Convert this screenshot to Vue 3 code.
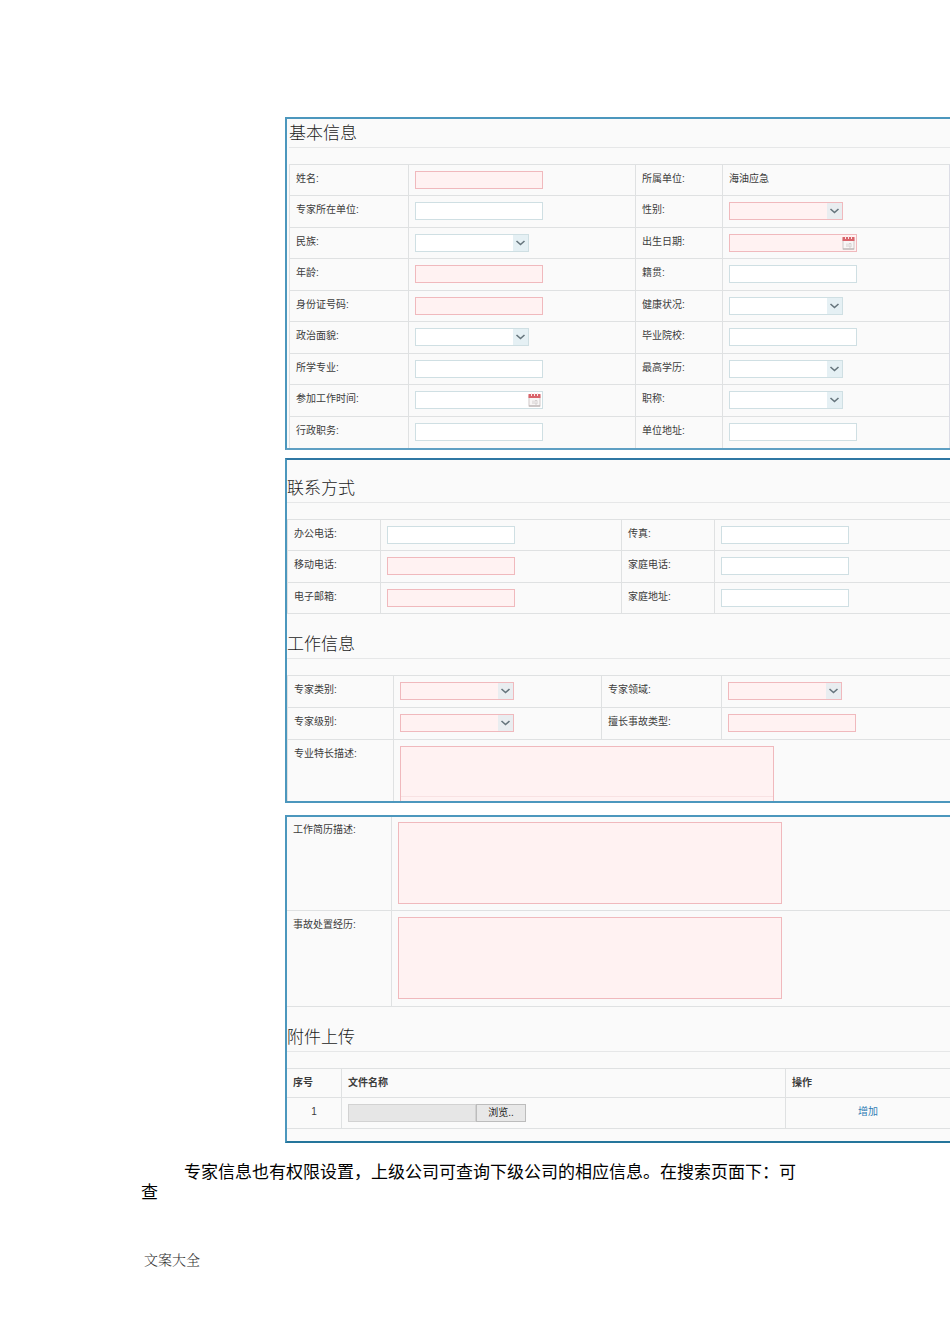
<script setup>
import { reactive } from 'vue'

const basicRows = [
  [{ id: 'name', label: '姓名', type: 'text', required: true }, { id: 'org', label: '所属单位', type: 'static', value: '海油应急' }],
  [{ id: 'workUnit', label: '专家所在单位', type: 'text' }, { id: 'gender', label: '性别', type: 'select', required: true }],
  [{ id: 'nation', label: '民族', type: 'select' }, { id: 'birthday', label: '出生日期', type: 'date', required: true }],
  [{ id: 'age', label: '年龄', type: 'text', required: true }, { id: 'native', label: '籍贯', type: 'text' }],
  [{ id: 'idCard', label: '身份证号码', type: 'text', required: true }, { id: 'health', label: '健康状况', type: 'select' }],
  [{ id: 'politics', label: '政治面貌', type: 'select' }, { id: 'school', label: '毕业院校', type: 'text' }],
  [{ id: 'major', label: '所学专业', type: 'text' }, { id: 'degree', label: '最高学历', type: 'select' }],
  [{ id: 'workDate', label: '参加工作时间', type: 'date' }, { id: 'title', label: '职称', type: 'select' }],
  [{ id: 'duty', label: '行政职务', type: 'text' }, { id: 'address', label: '单位地址', type: 'text' }],
]
const contactRows = [
  [{ id: 'officeTel', label: '办公电话', type: 'text' }, { id: 'fax', label: '传真', type: 'text' }],
  [{ id: 'mobile', label: '移动电话', type: 'text', required: true }, { id: 'homeTel', label: '家庭电话', type: 'text' }],
  [{ id: 'email', label: '电子邮箱', type: 'text', required: true }, { id: 'homeAddress', label: '家庭地址', type: 'text' }],
]
const workRows = [
  [{ id: 'category', label: '专家类别', type: 'select', required: true }, { id: 'field', label: '专家领域', type: 'select', required: true }],
  [{ id: 'level', label: '专家级别', type: 'select', required: true }, { id: 'accident', label: '擅长事故类型', type: 'text', required: true }],
]
const sections = [
  { key: 'basic', panel: 'first', title: '基本信息', rows: basicRows },
  { key: 'contact', panel: 'second', title: '联系方式', rows: contactRows },
  { key: 'work', panel: 'second', title: '工作信息', rows: workRows, extra: { id: 'speciality', label: '专业特长描述' } },
]
const panels = ['first', 'second'].map((name) => ({ name, sections: sections.filter((s) => s.panel === name) }))
const histories = [
  { id: 'resume', label: '工作简历描述' },
  { id: 'handling', label: '事故处置经历' },
]
const form = reactive({})
</script>

<template>
  <main class="page">
    <form class="sheets" @submit.prevent>
      <section v-for="panel in panels" :key="panel.name" class="panel" :class="panel.name">
        <template v-for="section in panel.sections" :key="section.key">
          <h2>{{ section.title }}</h2>
          <table :class="section.key">
            <colgroup><col class="c1" /><col class="c2" /><col class="c3" /><col /></colgroup>
            <tbody>
              <tr v-for="(row, i) in section.rows" :key="i">
                <template v-for="f in row" :key="f.id">
                  <th scope="row">
                    <span v-if="f.type === 'static'">{{ f.label }}:</span>
                    <label v-else :for="f.id">{{ f.label }}:</label>
                  </th>
                  <td>
                    <span v-if="f.type === 'static'">{{ f.value }}</span>
                    <div v-else class="control" :class="[f.type, { required: f.required }]">
                      <select v-if="f.type === 'select'" :id="f.id" v-model="form[f.id]"></select>
                      <input v-else :id="f.id" v-model="form[f.id]" type="text" />
                      <svg v-if="f.type === 'select'" class="arrow" viewBox="0 0 15 16" aria-hidden="true">
                        <path d="M3.5 6 7.5 9.5 11.5 6" />
                      </svg>
                      <svg v-if="f.type === 'date'" class="calendar" viewBox="0 0 13 14" aria-hidden="true">
                        <rect x="1" y="3" width="11" height="10" fill="#f8f6f6" stroke="#cfc8c8" />
                        <path d="M1 13h11" stroke="#b5adad" />
                        <path d="M0.5 1h12v4h-12z" fill="#d9646b" />
                        <path d="M3.5 0v3M6.5 0v3M9.5 0v3" stroke="#fbe9e9" />
                        <path d="M5 7.5v3.5M7 7.5h2v3.5h-2z" fill="none" stroke="#d4cfcf" />
                      </svg>
                    </div>
                  </td>
                </template>
              </tr>
              <tr v-if="section.extra" class="clipped">
                <th scope="row"><label :for="section.extra.id">{{ section.extra.label }}:</label></th>
                <td colspan="3">
                  <div class="clip"><textarea :id="section.extra.id" v-model="form[section.extra.id]"></textarea></div>
                </td>
              </tr>
            </tbody>
          </table>
        </template>
      </section>

      <section class="panel third">
        <table class="history">
          <colgroup><col class="c1" /><col /></colgroup>
          <tbody>
            <tr v-for="h in histories" :key="h.id">
              <th scope="row"><label :for="h.id">{{ h.label }}:</label></th>
              <td><textarea :id="h.id" v-model="form[h.id]"></textarea></td>
            </tr>
          </tbody>
        </table>
        <h2>附件上传</h2>
        <table class="files">
          <colgroup><col class="c1" /><col class="c2" /><col /></colgroup>
          <thead>
            <tr><th scope="col">序号</th><th scope="col">文件名称</th><th scope="col">操作</th></tr>
          </thead>
          <tbody>
            <tr>
              <td class="center">1</td>
              <td>
                <div class="file">
                  <input type="text" readonly aria-label="文件名称" /><button type="button">浏览..</button>
                </div>
              </td>
              <td class="center"><a href="#">增加</a></td>
            </tr>
          </tbody>
        </table>
      </section>
    </form>

    <p class="note">专家信息也有权限设置，上级公司可查询下级公司的相应信息。在搜索页面下：可查</p>
    <footer>文案大全</footer>
  </main>
</template>

<style>
body {
  background: #fff;
}
</style>

<style scoped>
.page {
  box-sizing: border-box;
  padding-top: 117px;
  padding-bottom: 76px;
  font-family: "Liberation Sans", "Noto Sans CJK SC", sans-serif;
  color: #3c3c3c;
}
.sheets {
  margin-left: 285px;
  display: flex;
  flex-direction: column;
  font-size: 10px;
  line-height: 16px;
}
.panel {
  border: 2px solid #4c97bd;
  border-right: 0;
  background: #fafafa;
}
.first {
  padding: 2px 0 0 2px;
  border-bottom-color: #5e9fc3;
}
.second {
  margin-top: 8px;
  padding-top: 16px;
  border-top-color: #2f77a3;
}
.third {
  margin-top: 12px;
  padding-bottom: 12px;
  border-bottom-color: #25759b;
}
h2 {
  margin: 0 0 16px;
  border-bottom: 1px solid #e6e7e8;
  font-size: 17px;
  line-height: 26px;
  font-weight: 300;
  color: #1c1c1c;
}
table + h2 {
  margin-top: 18px;
}
table {
  width: 100%;
  table-layout: fixed;
  border-collapse: separate;
  border-spacing: 0;
  border-top: 1px solid #dfe1e2;
}
th,
td {
  box-sizing: border-box;
  padding: 6px 0 0 6px;
  border-left: 1px solid #dfe1e2;
  border-bottom: 1px solid #dfe1e2;
  text-align: left;
  vertical-align: top;
  font-weight: 400;
}
tr {
  height: 32px;
}
.basic tr:nth-child(odd),
.contact tr:nth-child(odd) {
  height: 31px;
}
.basic {
  border-right: 1px solid #dcdde6;
}
.basic tr:last-child > * {
  border-bottom: 0;
}
.basic .c1 { width: 119px; }
.basic .c2 { width: 227px; }
.basic .c3 { width: 87px; }
.contact .c1,
.contact .c3 { width: 93px; }
.contact .c2 { width: 241px; }
.work .c1 { width: 106px; }
.work .c2 { width: 208px; }
.work .c3 { width: 120px; }
.history .c1 { width: 104px; }
.files .c1 { width: 54px; }
.files .c2 { width: 444px; }

.control {
  position: relative;
  width: 128px;
  height: 18px;
}
.control.select {
  width: 114px;
}
input,
select,
textarea {
  box-sizing: border-box;
  display: block;
  margin: 0;
  padding: 0 4px;
  border: 1px solid #cfdfe3;
  border-radius: 0;
  background: #fff;
  font: inherit;
  color: inherit;
  appearance: none;
}
.control input,
.control select {
  width: 100%;
  height: 100%;
}
.required input,
.required select,
textarea {
  border-color: #f0b9bd;
  background: #fff2f2;
}
.arrow,
.calendar {
  position: absolute;
  pointer-events: none;
}
.arrow {
  top: 1px;
  right: 1px;
  width: 15px;
  height: 16px;
  background: #e5f0f4;
  fill: none;
  stroke: #66757d;
  stroke-width: 1.6;
}
.required .arrow {
  background: #e9edf0;
}
.calendar {
  top: 2px;
  right: 2px;
  width: 13px;
  height: 14px;
}
textarea {
  width: 384px;
  height: 82px;
  resize: none;
}
.clipped > * {
  border-bottom: 0;
}
.clip {
  height: 55px;
  overflow: hidden;
}
.clip textarea {
  width: 374px;
  background: linear-gradient(#f8e2e3, #f8e2e3) 0 49px / 100% 1px no-repeat #fff2f2;
}
.history {
  border-top: 0;
}
.history tr {
  height: 96px;
}
.history tr:first-child {
  height: 94px;
}
.history tr:first-child > * {
  padding-top: 5px;
}
.third tr > :first-child {
  border-left: 0;
}
.files thead tr {
  height: 29px;
}
.files tbody tr {
  height: 31px;
}
.files thead th {
  font-weight: 700;
}
.files .center {
  padding-left: 0;
  text-align: center;
}
.files a {
  color: #2f7db5;
  text-decoration: none;
}
.file {
  display: flex;
  height: 18px;
}
.file input {
  width: 128px;
  border-color: #d2d2d2;
  background: #e6e6e6;
}
.file button {
  box-sizing: border-box;
  width: 50px;
  margin: 0;
  padding: 0;
  border: 1px solid #bcbcbc;
  background: #e8e8e8;
  font: inherit;
  color: #222;
}
.note {
  margin: 20px 141px 0;
  font-size: 17px;
  line-height: 20px;
  text-indent: 43px;
  color: #000;
}
footer {
  margin: 48px 144px 0;
  font-family: "Liberation Serif", "Noto Serif CJK SC", "Noto Sans CJK SC", serif;
  font-size: 14px;
  line-height: 20px;
  font-weight: 300;
  color: #333;
}
</style>
